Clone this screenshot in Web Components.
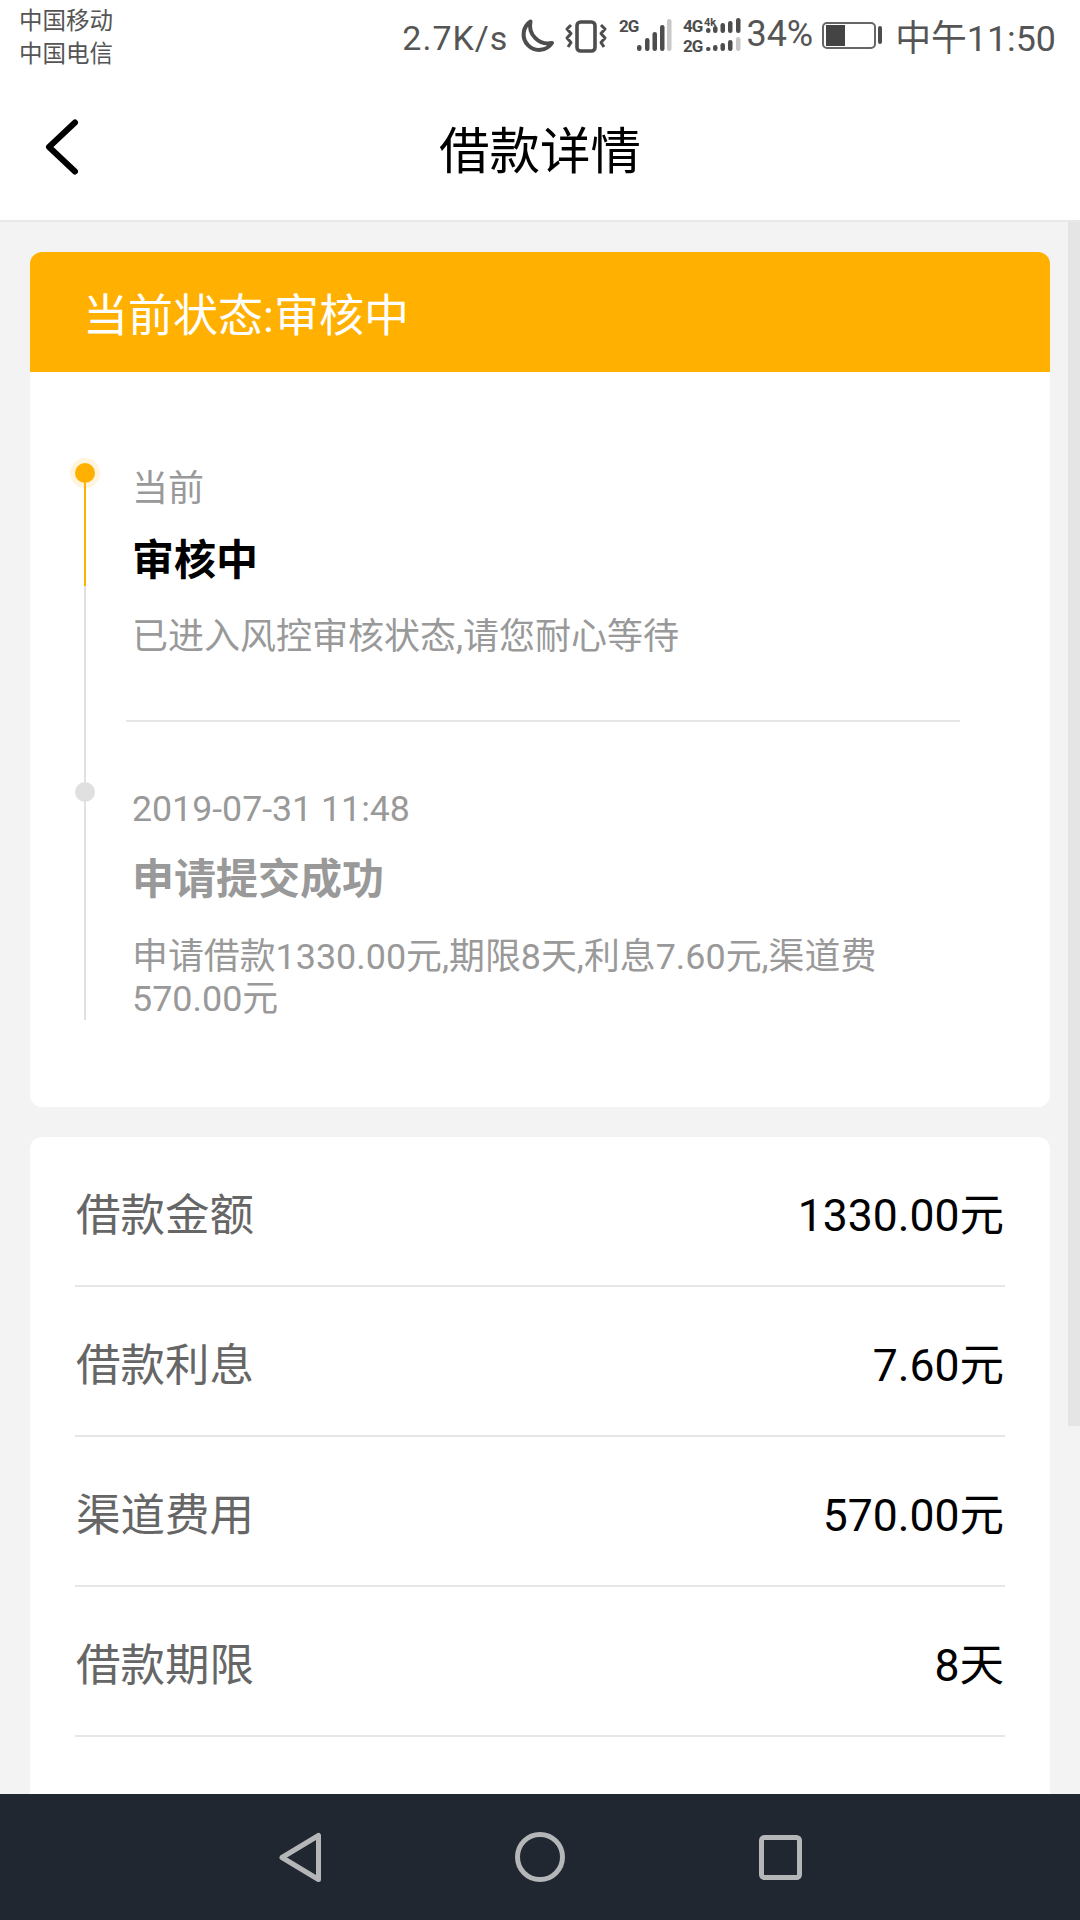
<!DOCTYPE html>
<html lang="zh">
<head>
<meta charset="utf-8">
<title>借款详情</title>
<style>
    html, body {
        margin: 0;
        padding: 0;
        background: #f3f3f3;
    }
    body {
        font-family: Roboto, "Noto Sans CJK SC", sans-serif;
    }
</style>
</head>
<body>
<loan-app>
    <status-bar></status-bar>
    <title-bar>借款详情</title-bar>
    <scroll-page>
        <status-card state="当前状态:审核中">
            <timeline-step active divided>
                <span slot="time">当前</span>
                <span slot="title">审核中</span>
                <span slot="desc">已进入风控审核状态,请您耐心等待</span>
            </timeline-step>
            <timeline-step>
                <span slot="time">2019-07-31 11:48</span>
                <span slot="title">申请提交成功</span>
                <span slot="desc">申请借款1330.00元,期限8天,利息7.60元,渠道费570.00元</span>
            </timeline-step>
        </status-card>
        <detail-card>
            <detail-row label="借款金额">1330.00元</detail-row>
            <detail-row label="借款利息">7.60元</detail-row>
            <detail-row label="渠道费用">570.00元</detail-row>
            <detail-row label="借款期限">8天</detail-row>
        </detail-card>
    </scroll-page>
    <system-nav></system-nav>
</loan-app>

<script>
    const fontStack = `Roboto, "Noto Sans CJK SC", sans-serif`;

    const define = (name, markup) => customElements.define(name,
        class extends HTMLElement {
            constructor() {
                super();
                this.attachShadow({ mode: 'open' });
                this.shadowRoot.innerHTML = markup(this);
            }
        });

    define('loan-app', () => `<style>
        :host {
            display: flex;
            flex-direction: column;
            width: 1080px;
            height: 1920px;
            overflow: hidden;
            background: #f3f3f3;
            font-family: ${fontStack};
        }
    </style><slot></slot>`);

    define('status-bar', () => `<style>
        :host {
            display: flex;
            align-items: center;
            flex: none;
            height: 76px;
            padding: 0 24px 8px 19px;
            background: #fff;
            color: #555;
        }
        .carriers {
            font-size: 23.5px;
            line-height: 33px;
            margin-right: auto;
        }
        .carriers div { white-space: nowrap; }
        .speed { font-size: 34px; letter-spacing: 1px; }
        .battery-text { font-size: 36px; margin: 0 8px 8px 3px; }
        .time { font-size: 35.8px; margin: 0 0 6px 12px; }
        svg { display: block; flex: none; }
        .moon { margin: 0 0 4px 11px; }
        .vibrate { margin: 0 0 4px 8px; }
        .signal { margin: 0 0 2px 4px; }
        .battery { margin-bottom: 5px; }
        text { font-family: ${fontStack}; font-weight: 700; fill: #4d4d4d; }
        .tag { font-size: 17px; letter-spacing: -1px; }
        .tiny { font-size: 11px; }
    </style>
    <div class="carriers"><div>中国移动</div><div>中国电信</div></div>
    <span class="speed">2.7K/s</span>
    <svg class="moon" width="36" height="36" viewBox="521 18 36 36">
        <path d="M532.5 21.5A15.5 15.5 0 1 0 554 43A18 18 0 0 1 532.5 21.5Z" fill="none" stroke="#4d4d4d" stroke-width="4" stroke-linejoin="round"/>
    </svg>
    <svg class="vibrate" width="46" height="36" viewBox="565 18 46 36">
        <rect x="579" y="22" width="18" height="29" rx="3.5" fill="none" stroke="#4d4d4d" stroke-width="3.6"/>
        <path d="M573 25l-4 4l4 4.5l-4 4.5l4 4.5l-3 4.5M603 25l4 4l-4 4.5l4 4.5l-4 4.5l3 4.5" fill="none" stroke="#4d4d4d" stroke-width="3" stroke-linejoin="round"/>
    </svg>
    <svg class="signal" width="130" height="44" viewBox="0 0 130 44">
        <text class="tag" x="6" y="17">2G</text>
        <g fill="#4d4d4d">
            <rect x="24" y="30" width="4.5" height="6" rx="2.2"/>
            <rect x="32" y="23" width="4.5" height="13" rx="2.2"/>
            <rect x="39.5" y="17" width="4.5" height="19" rx="2.2"/>
            <rect x="47" y="10" width="4.5" height="26" rx="2.2"/>
        </g>
        <rect x="54" y="4" width="4.5" height="32" rx="2.2" fill="#c8c8c8"/>
        <text class="tag" x="70" y="17">4G</text>
        <text class="tiny" x="91" y="10.5">4k</text>
        <text class="tag" x="70" y="37">2G</text>
        <g fill="#4d4d4d">
            <rect x="93" y="13" width="4.5" height="5" rx="2.2"/>
            <rect x="100" y="11" width="4.5" height="7" rx="2.2"/>
            <rect x="107.5" y="8" width="4.5" height="10" rx="2.2"/>
            <rect x="115" y="6" width="4.5" height="12" rx="2.2"/>
            <rect x="123" y="3" width="4.5" height="15" rx="2.2"/>
            <rect x="93" y="32" width="4.5" height="4" rx="2"/>
            <rect x="100" y="30" width="4.5" height="6" rx="2.2"/>
            <rect x="107.5" y="28" width="4.5" height="8" rx="2.2"/>
            <rect x="115" y="25" width="4.5" height="11" rx="2.2"/>
        </g>
        <rect x="123" y="22" width="4.5" height="14" rx="2.2" fill="#c8c8c8"/>
    </svg>
    <span class="battery-text">34%</span>
    <svg class="battery" width="62" height="31" viewBox="823 20 62 31">
        <rect x="825" y="23" width="52" height="25" rx="4" fill="none" stroke="#666" stroke-width="2"/>
        <rect x="828" y="25" width="19" height="21" fill="#444"/>
        <rect x="880" y="26" width="4" height="18" rx="2" fill="#4d4d4d"/>
    </svg>
    <span class="time">中午11:50</span>`);

    define('title-bar', () => `<style>
        :host {
            display: flex;
            align-items: center;
            justify-content: center;
            position: relative;
            flex: none;
            height: 126px;
            padding-bottom: 10px;
            background: #fff;
            border-bottom: 2px solid #e8e8e8;
            color: #000;
            font-size: 50.5px;
        }
        svg {
            position: absolute;
            left: 42px;
            top: 32px;
        }
    </style>
    <svg width="40" height="60" viewBox="42 116 40 60">
        <path d="M75 122.5L49 147L75 171.5" fill="none" stroke="#000" stroke-width="6" stroke-linecap="round" stroke-linejoin="round"/>
    </svg>
    <slot></slot>`);

    define('scroll-page', () => `<style>
        :host {
            display: flex;
            flex: 1;
            min-height: 0;
            overflow: hidden;
        }
        .content {
            display: flex;
            flex-direction: column;
            gap: 30px;
            flex: 1;
            min-width: 0;
            padding: 30px 18px 0 30px;
        }
        .track {
            flex: none;
            width: 12px;
        }
        .thumb {
            height: 1204px;
            background: #e5e5e5;
        }
    </style>
    <div class="content"><slot></slot></div>
    <div class="track"><div class="thumb"></div></div>`);

    define('status-card', el => `<style>
        :host {
            display: block;
            flex: none;
            background: #fff;
            border-radius: 12px;
            overflow: hidden;
        }
        .banner {
            display: flex;
            align-items: center;
            height: 120px;
            padding-left: 53px;
            background: #ffb000;
            color: #fff;
            font-size: 45px;
        }
        .body {
            padding: 91px 90px 87px 45px;
        }
    </style>
    <div class="banner">${el.getAttribute('state')}</div>
    <div class="body"><slot></slot></div>`);

    define('timeline-step', el => {
        const active = el.hasAttribute('active');
        return `<style>
        :host {
            display: flex;
            gap: 37px;
        }
        .rail {
            display: flex;
            flex-direction: column;
            align-items: center;
            flex: none;
            width: 20px;
        }
        .dot {
            flex: none;
            width: 20px;
            height: 20px;
            border-radius: 50%;
            background: #e0e0e0;
        }
        .dot.on {
            background: #ffb000;
            box-shadow: 0 0 0 5px #fff4de;
        }
        .lead {
            flex: none;
            width: 2px;
            height: 60px;
            background: #e0e0e0;
        }
        .hot {
            flex: none;
            width: 2px;
            height: 103px;
            background: #ffb000;
        }
        .line {
            flex: 1;
            width: 2px;
            background: #e0e0e0;
        }
        .text {
            flex: 1;
            min-width: 0;
            padding-top: ${active ? 6 : 67}px;
        }
        .time {
            font-size: ${active ? 36 : 35.7}px;
            line-height: 40px;
            color: #999;
        }
        .title {
            margin-top: ${active ? 27 : 26}px;
            font-size: 42px;
            line-height: 50px;
            font-weight: 700;
            color: ${active ? '#000' : '#999'};
        }
        .desc {
            margin-top: ${active ? 30 : 31}px;
            font-size: ${active ? 36 : 35.9}px;
            line-height: 42px;
            color: #999;
        }
        .rule {
            height: 2px;
            margin: 62px 0 0 -6px;
            background: #e6e6e6;
        }
    </style>
    <div class="rail">
        ${active ? '' : '<div class="lead"></div>'}
        <div class="dot ${active ? 'on' : ''}"></div>
        ${active ? '<div class="hot"></div>' : ''}
        <div class="line"></div>
    </div>
    <div class="text">
        <div class="time"><slot name="time"></slot></div>
        <div class="title"><slot name="title"></slot></div>
        <div class="desc"><slot name="desc"></slot></div>
        ${el.hasAttribute('divided') ? '<div class="rule"></div>' : ''}
    </div>`;
    });

    define('detail-card', () => `<style>
        :host {
            display: block;
            flex: none;
            height: 720px;
            padding: 0 45px;
            background: #fff;
            border-radius: 12px;
        }
    </style><slot></slot>`);

    define('detail-row', el => `<style>
        :host {
            display: flex;
            align-items: center;
            justify-content: space-between;
            box-sizing: border-box;
            height: 150px;
            padding: 0 1px 0 1px;
            border-bottom: 2px solid #e6e6e6;
            font-size: 44.5px;
            color: #000;
        }
        .label { color: #666; }
    </style>
    <span class="label">${el.getAttribute('label')}</span>
    <span><slot></slot></span>`);

    define('system-nav', () => `<style>
        :host {
            display: flex;
            align-items: center;
            justify-content: center;
            flex: none;
            height: 126px;
            background: #212730;
        }
        .key {
            display: flex;
            justify-content: center;
            width: 240px;
        }
        svg { display: block; }
        * { stroke-linejoin: round; }
    </style>
    <div class="key"><svg width="60" height="60" viewBox="0 0 60 60"><path d="M48.5 8.5V52.5L12 30.5Z" fill="none" stroke="#b4b6b8" stroke-width="5"/></svg></div>
    <div class="key"><svg width="60" height="60" viewBox="0 0 60 60"><circle cx="30" cy="30" r="22.5" fill="none" stroke="#b4b6b8" stroke-width="5"/></svg></div>
    <div class="key"><svg width="60" height="60" viewBox="0 0 60 60"><rect x="11.5" y="10.5" width="38" height="40" rx="3" fill="none" stroke="#b4b6b8" stroke-width="5"/></svg></div>`);
</script>
</body>
</html>
